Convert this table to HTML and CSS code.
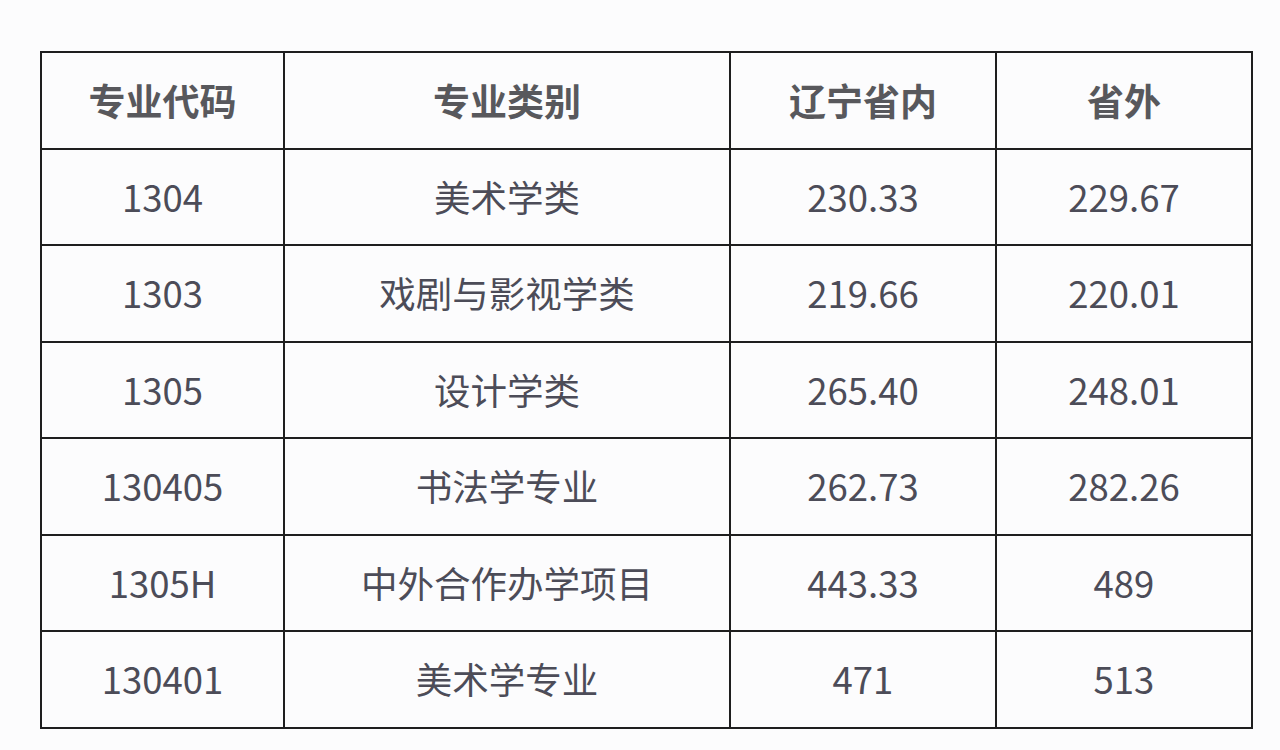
FILE: index.html
```html
<!DOCTYPE html>
<html lang="zh-CN">
<head>
<meta charset="utf-8">
<title>专业分数线</title>
<link rel="stylesheet" href="styles.css">
</head>
<body>
<table class="score-table">
  <colgroup>
    <col class="c1"><col class="c2"><col class="c3"><col class="c4">
  </colgroup>
  <thead>
    <tr><th>专业代码</th><th>专业类别</th><th>辽宁省内</th><th>省外</th></tr>
  </thead>
  <tbody>
    <tr><td>1304</td><td>美术学类</td><td>230.33</td><td>229.67</td></tr>
    <tr><td>1303</td><td>戏剧与影视学类</td><td>219.66</td><td>220.01</td></tr>
    <tr><td>1305</td><td>设计学类</td><td>265.40</td><td>248.01</td></tr>
    <tr><td>130405</td><td>书法学专业</td><td>262.73</td><td>282.26</td></tr>
    <tr><td>1305H</td><td>中外合作办学项目</td><td>443.33</td><td>489</td></tr>
    <tr><td>130401</td><td>美术学专业</td><td>471</td><td>513</td></tr>
  </tbody>
</table>
</body>
</html>
```
FILE: styles.css
```css
html, body {
  margin: 0;
  padding: 0;
  background: #fcfcfd;
}
body {
  padding: 51px 0 0 40px;
  font-family: "Noto Sans CJK SC", "Noto Sans", sans-serif;
}
.score-table {
  border-collapse: collapse;
  table-layout: fixed;
  width: 1212px;
}
.c1 { width: 243px; }
.c2 { width: 446px; }
.c3 { width: 266px; }
.c4 { width: 256px; }
.score-table th,
.score-table td {
  border: 2.5px solid #1e1e1e;
  height: 94.5px;
  padding: 0;
  text-align: center;
  vertical-align: middle;
  line-height: 1;
}
.score-table th {
  font-size: 37px;
  font-weight: 700;
  color: #58585c;
}
.score-table td {
  font-size: 36.5px;
  font-weight: 400;
  color: #4c4c58;
}
```
